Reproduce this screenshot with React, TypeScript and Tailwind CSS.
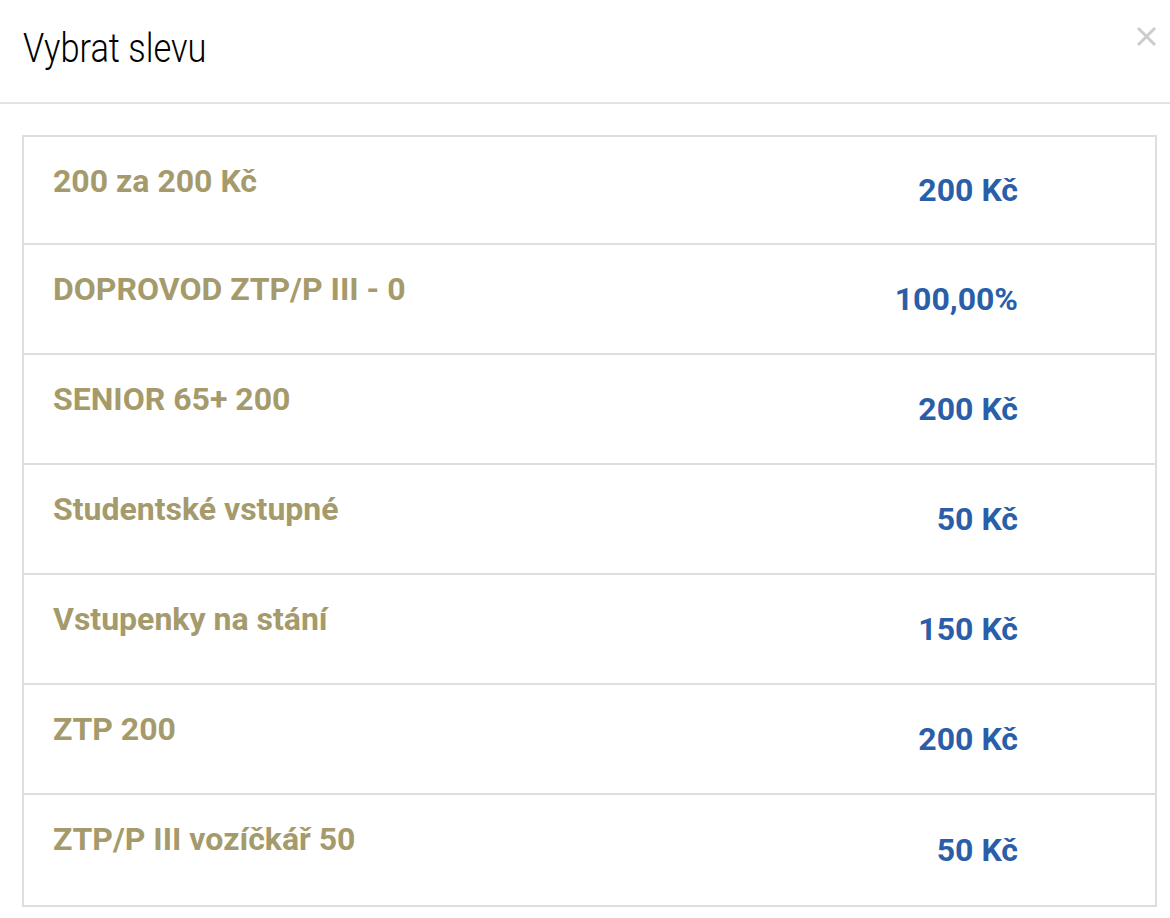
const discounts = [
  { name: '200 za 200 Kč', value: '200 Kč' },
  { name: 'DOPROVOD ZTP/P III - 0', value: '100,00%' },
  { name: 'SENIOR 65+ 200', value: '200 Kč' },
  { name: 'Studentské vstupné', value: '50 Kč' },
  { name: 'Vstupenky na stání', value: '150 Kč' },
  { name: 'ZTP 200', value: '200 Kč' },
  { name: 'ZTP/P III vozíčkář 50', value: '50 Kč' },
];

export default function App() {
  return (
    <div className="min-h-screen w-[1170px] bg-white font-['Roboto',sans-serif]">
      <div className="flex h-[104px] items-start justify-between border-b-2 border-[#e3e3e3] pl-[23px] pr-[13px] pt-[19px]">
        <h4 className="origin-left scale-x-[0.86] text-[40px] font-light leading-normal text-black">Vybrat slevu</h4>
        <button className="mt-[7px] flex h-[21px] w-[21px] items-center justify-center" aria-label="Zavřít">
          <svg width="21" height="21" viewBox="0 0 21 21" fill="none" stroke="#cccccc" strokeWidth="3">
            <line x1="2" y1="2" x2="19" y2="19" />
            <line x1="19" y1="2" x2="2" y2="19" />
          </svg>
        </button>
      </div>

      <div className="pl-[22px] pr-[13px] pt-[31px] pb-[13px]">
        <div className="divide-y-2 divide-[#dedede] border-2 border-[#dedede]">
          {discounts.map((d) => (
            <div key={d.name} className="flex h-[110px] justify-between pl-[29px] pr-[137px] first:h-[108px]">
              <span className="self-start pt-[20px] text-[32px] font-bold leading-normal text-[#a59a6b]">{d.name}</span>
              <span className="self-center text-[32px] font-bold leading-normal text-[#2a5ea8]">{d.value}</span>
            </div>
          ))}
        </div>
      </div>
    </div>
  );
}
